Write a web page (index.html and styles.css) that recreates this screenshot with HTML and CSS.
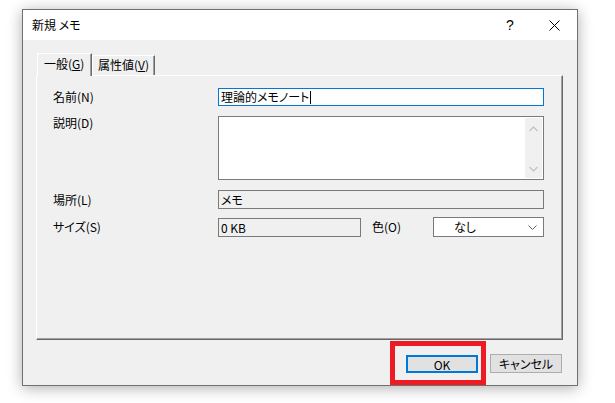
FILE: index.html
```html
<!DOCTYPE html>
<html lang="ja">
<head>
<meta charset="utf-8">
<link rel="stylesheet" href="styles.css">
</head>
<body>
<div class="window">
  <div class="titlebar">
    <div class="title">新規 メモ</div>
    <div class="cap help">?</div>
    <div class="cap close">
      <svg width="11" height="11" viewBox="0 0 11 11"><path d="M0.5 0.5 L10.5 10.5 M10.5 0.5 L0.5 10.5" stroke="#000" stroke-width="1" fill="none"/></svg>
    </div>
  </div>
  <div class="body">
    <div class="tabs">
      <div class="tab active">一般(<u>G</u>)</div>
      <div class="tab">属性値(<u>V</u>)</div>
    </div>
    <div class="panel">
      <div class="row r-name">
        <div class="label">名前(N)</div>
        <div class="field input focus"><span class="txt">理論的メモノート</span><span class="caret"></span></div>
      </div>
      <div class="row r-desc">
        <div class="label top">説明(D)</div>
        <div class="field textarea">
          <div class="scroll">
            <svg width="9" height="6" viewBox="0 0 9 6"><polyline points="0.5,5 4.5,1 8.5,5" stroke="#c4c4c4" stroke-width="1.3" fill="none"/></svg>
            <svg width="9" height="6" viewBox="0 0 9 6"><polyline points="0.5,1 4.5,5 8.5,1" stroke="#c4c4c4" stroke-width="1.3" fill="none"/></svg>
          </div>
        </div>
      </div>
      <div class="row r-loc">
        <div class="label">場所(L)</div>
        <div class="field readonly">メモ</div>
      </div>
      <div class="row r-size">
        <div class="label">サイズ(S)</div>
        <div class="field readonly size">0 KB</div>
        <div class="label color">色(O)</div>
        <div class="field combo"><span class="ctext">なし</span>
          <svg width="9" height="5" viewBox="0 0 9 5"><polyline points="0.5,0.5 4.5,4.5 8.5,0.5" stroke="#606060" stroke-width="1" fill="none"/></svg>
        </div>
      </div>
    </div>
    <div class="buttons">
      <div class="btn-wrap">
        <div class="btn default">OK</div>
        <div class="highlight"></div>
      </div>
      <div class="btn">キャンセル</div>
    </div>
  </div>
</div>
</body>
</html>
```
FILE: styles.css
```css
* { box-sizing: border-box; }
html, body { margin: 0; padding: 0; background: #fff; }
body {
  width: 615px; height: 403px; overflow: hidden;
  font-family: "Noto Sans CJK JP", "Noto Sans", sans-serif;
  font-size: 12px; color: #000;
  font-feature-settings: "palt";
}
.window {
  width: 556px; height: 377px;
  margin: 9px 0 0 22px;
  border: 1px solid #707070;
  background: #f0f0f0;
  display: flex; flex-direction: column;
  box-shadow: 0 2px 14px rgba(0,0,0,0.32);
}
.titlebar {
  height: 30px; background: #fff;
  display: flex; align-items: center;
  padding-left: 9px;
}
.title { flex: 1; font-size: 12px; line-height: 14px; }
.cap { height: 30px; display: flex; align-items: center; justify-content: center; }
.help { width: 46px; font-family: "Liberation Sans", sans-serif; font-size: 14px; padding-left: 4px; }
.close { width: 46px; }
.body { flex: 1; padding: 13px 14px 0 13px; display: flex; flex-direction: column; }
.tabs { display: flex; align-items: flex-end; height: 22px; padding-left: 1px; }
.tab {
  height: 20px; width: 63px;
  border-top: 1px solid #fff; border-left: 1px solid #fff;
  border-right: 1px solid #696969;
  box-shadow: inset -1px 0 0 #a0a0a0;
  padding-left: 5px; line-height: 18px; white-space: nowrap;
  background: #f0f0f0;
}
.tab.active {
  width: 55px; height: 23px; margin-bottom: -1px;
  padding-left: 6px; line-height: 20px;
  position: relative; z-index: 1;
}
.tab u { text-underline-offset: 1px; }
.panel {
  height: 265px;
  border-top: 1px solid #fff; border-left: 1px solid #fff;
  border-right: 1px solid #696969; border-bottom: 1px solid #696969;
  box-shadow: inset -1px -1px 0 #a0a0a0;
  padding: 12px 18px 0 16px;
}
.row { display: flex; align-items: center; }
.label { width: 165px; flex: none; line-height: 14px; white-space: nowrap; }
.label.top { align-self: flex-start; padding-top: 0; }
.field { flex: 1; border: 1px solid #7a7a7a; background: #fff; line-height: 16px; padding-left: 2px; white-space: nowrap; }
.r-name { height: 18px; }
.input { height: 18px; display: flex; align-items: center; }
.input.focus { border-color: #0078d7; }
.caret { display: inline-block; width: 1px; height: 13px; background: #000; margin-left: 1px; }
.r-desc { margin-top: 10px; }
.textarea { height: 64px; display: flex; justify-content: flex-end; padding: 1px; }
.scroll { width: 17px; background: #f0f0f0; display: flex; flex-direction: column; justify-content: space-between; align-items: center; padding: 8px 0 6px; }
.scroll svg { display: block; }
.r-loc { margin-top: 10px; }
.readonly { background: #f0f0f0; height: 19px; line-height: 17px; }
.r-size { margin-top: 8px; height: 20px; }
.size { flex: none; width: 143px; height: 19px; }
.label.color { width: 72px; padding-left: 11px; }
.combo { flex: 1; height: 20px; display: flex; align-items: center; justify-content: space-between; padding: 0 6px 0 20px; }
.combo svg { display: block; }
.buttons { display: flex; justify-content: flex-end; gap: 12px; margin-top: 14px; padding-right: 1px; }
.btn-wrap { position: relative; }
.btn {
  width: 72px; height: 19px;
  border: 1px solid #adadad; background: #e1e1e1;
  text-align: center; line-height: 17px;
}
.btn.default { border: 2px solid #0078d7; line-height: 15px; height: 18px; margin-top: 1px; }
.highlight {
  position: absolute; left: -16px; top: -13px;
  width: 96px; height: 44px;
  border: 5px solid #ed1c24;
}
```
